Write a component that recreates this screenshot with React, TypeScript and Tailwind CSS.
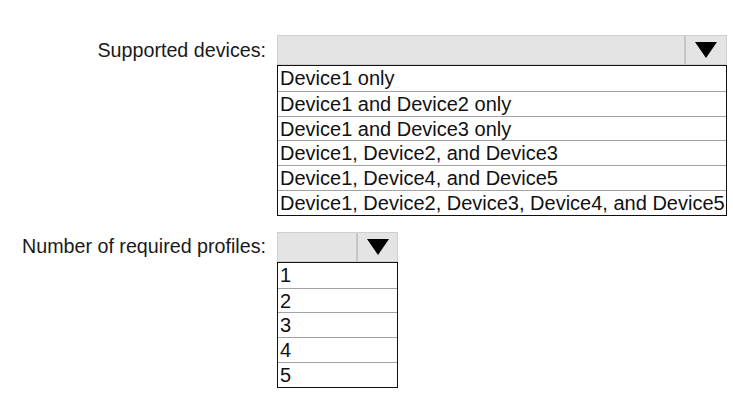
const devices = [
  'Device1 only',
  'Device1 and Device2 only',
  'Device1 and Device3 only',
  'Device1, Device2, and Device3',
  'Device1, Device4, and Device5',
  'Device1, Device2, Device3, Device4, and Device5',
];

const profiles = ['1', '2', '3', '4', '5'];

function Arrow() {
  return (
    <svg width="22" height="16" viewBox="0 0 22 16">
      <polygon points="0,0 22,0 11,16" fill="#000" />
    </svg>
  );
}

function Dropdown({ width, btn, options }: { width: string; btn: string; options: string[] }) {
  return (
    <div className={width}>
      <div className="flex h-[30px] border border-[#cfcfcf] bg-[#e4e4e4]">
        <div className="flex-1" />
        <div className={`${btn} flex items-center justify-center border-l-2 border-[#c6c6c6]`}>
          <Arrow />
        </div>
      </div>
      <div className="border border-[#111] bg-white">
        {options.map((o, i) => (
          <div
            key={o}
            className={`h-[24.8px] pl-[2px] text-[20px] leading-[25px] text-[#111] whitespace-nowrap ${i > 0 ? 'border-t border-[#a3a3a3]' : ''}`}
          >
            {o}
          </div>
        ))}
      </div>
    </div>
  );
}

export default function App() {
  return (
    <div className="w-[733px] h-[396px] bg-white pt-[35px] font-['Liberation_Sans',Arial,sans-serif] text-[#1a1a1a]">
      <div className="flex items-start">
        <div className="w-[266px] h-[31px] flex items-center justify-end text-[19.7px]">Supported devices:</div>
        <div className="ml-[11px]">
          <Dropdown width="w-[450px]" btn="w-[42px]" options={devices} />
        </div>
      </div>
      <div className="flex items-start mt-[16px]">
        <div className="w-[266px] h-[30px] flex items-center justify-end text-[19.7px]">Number of required profiles:</div>
        <div className="ml-[11px]">
          <Dropdown width="w-[121px]" btn="w-[41px]" options={profiles} />
        </div>
      </div>
    </div>
  );
}
